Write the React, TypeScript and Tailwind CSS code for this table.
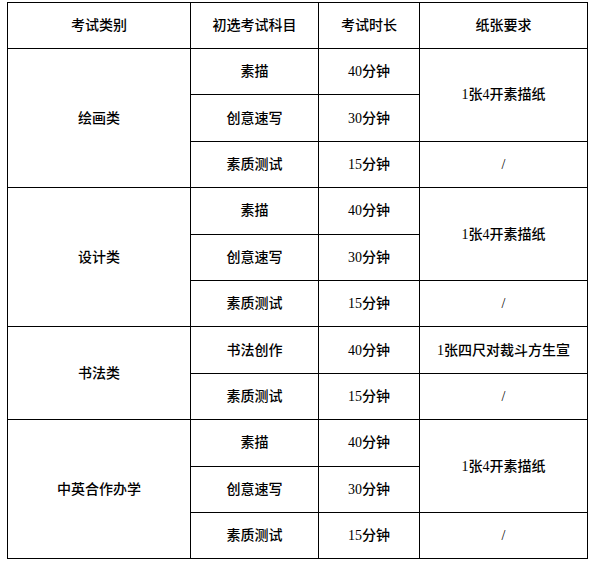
const groups = [
  {
    name: "绘画类",
    rows: [
      { subject: "素描", time: "40分钟" },
      { subject: "创意速写", time: "30分钟" },
      { subject: "素质测试", time: "15分钟" },
    ],
    paper: [
      { text: "1张4开素描纸", span: 2 },
      { text: "/", span: 1 },
    ],
  },
  {
    name: "设计类",
    rows: [
      { subject: "素描", time: "40分钟" },
      { subject: "创意速写", time: "30分钟" },
      { subject: "素质测试", time: "15分钟" },
    ],
    paper: [
      { text: "1张4开素描纸", span: 2 },
      { text: "/", span: 1 },
    ],
  },
  {
    name: "书法类",
    rows: [
      { subject: "书法创作", time: "40分钟" },
      { subject: "素质测试", time: "15分钟" },
    ],
    paper: [
      { text: "1张四尺对裁斗方生宣", span: 1 },
      { text: "/", span: 1 },
    ],
  },
  {
    name: "中英合作办学",
    rows: [
      { subject: "素描", time: "40分钟" },
      { subject: "创意速写", time: "30分钟" },
      { subject: "素质测试", time: "15分钟" },
    ],
    paper: [
      { text: "1张4开素描纸", span: 2 },
      { text: "/", span: 1 },
    ],
  },
]

const cell = "border border-black text-center align-middle p-0"

export default function App() {
  return (
    <div
      className="bg-white w-[595px] h-[565px] pt-[2px] pl-[7px] text-[14px] text-black font-medium"
      style={{ fontFamily: '"Liberation Serif", "Noto Sans CJK SC", serif' }}
    >
      <table className="border-collapse table-fixed w-[580px]">
        <colgroup>
          <col className="w-[183px]" />
          <col className="w-[128px]" />
          <col className="w-[101px]" />
          <col className="w-[168px]" />
        </colgroup>
        <thead>
          <tr className="h-[46px]">
            <th className={`${cell} font-medium`}>考试类别</th>
            <th className={`${cell} font-medium`}>初选考试科目</th>
            <th className={`${cell} font-medium`}>考试时长</th>
            <th className={`${cell} font-medium`}>纸张要求</th>
          </tr>
        </thead>
        <tbody>
          {groups.map((g) => {
            // which row starts a paper cell
            const starts: Record<number, { text: string; span: number }> = {}
            let idx = 0
            g.paper.forEach((p) => {
              starts[idx] = p
              idx += p.span
            })
            return g.rows.map((r, i) => (
              <tr key={g.name + i} className="h-[46.4px]">
                {i === 0 && (
                  <td className={cell} rowSpan={g.rows.length}>
                    {g.name}
                  </td>
                )}
                <td className={cell}>{r.subject}</td>
                <td className={cell}>{r.time}</td>
                {starts[i] && (
                  <td className={cell} rowSpan={starts[i].span}>
                    {starts[i].text}
                  </td>
                )}
              </tr>
            ))
          })}
        </tbody>
      </table>
    </div>
  )
}
